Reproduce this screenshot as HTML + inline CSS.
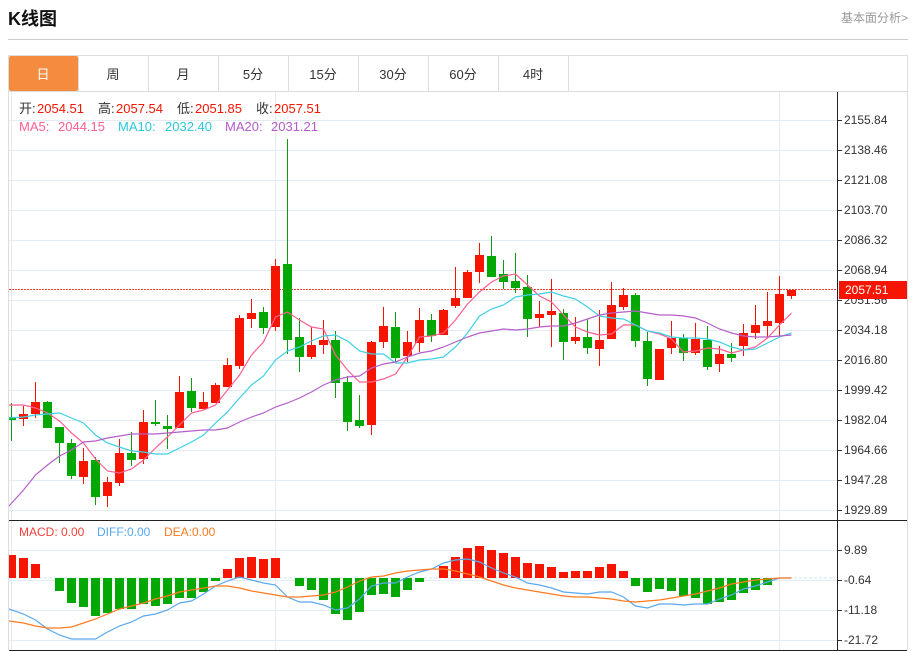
<!DOCTYPE html>
<html><head><meta charset="utf-8">
<style>
html,body{margin:0;padding:0;background:#fff;width:917px;height:651px;overflow:hidden}
svg{display:block}
text{font-family:"Liberation Sans","Noto Sans CJK SC",sans-serif}
.l{font-size:12px;fill:#333}
.h{font-size:13px}
</style></head><body>
<svg width="917" height="651" viewBox="0 0 917 651" xmlns="http://www.w3.org/2000/svg">
<defs><clipPath id="p"><rect x="9" y="92" width="828" height="558"/></clipPath></defs>
<text x="8" y="25" font-size="18" font-weight="700" fill="#111">K线图</text>
<text x="908" y="22" font-size="12" fill="#999" text-anchor="end">基本面分析&gt;</text>
<rect x="8" y="39" width="900" height="1" fill="#ccc"/>
<!-- frame -->
<path d="M8.5 55.5H907.5V650M8.5 55.5V650M8 91.5H908" fill="none" stroke="#ddd"/>
<rect x="9" y="56" width="69" height="35" rx="2" fill="#f58b3f"/>
<path d="M148.5 56V91M218.5 56V91M288.5 56V91M358.5 56V91M428.5 56V91M498.5 56V91M568.5 56V91M78.5 56V91" stroke="#ddd" fill="none"/>
<g font-size="13" text-anchor="middle" fill="#333">
<text x="43" y="79" fill="#fff">日</text>
<text x="113" y="79">周</text>
<text x="183" y="79">月</text>
<text x="253" y="79">5分</text>
<text x="323" y="79">15分</text>
<text x="393" y="79">30分</text>
<text x="463" y="79">60分</text>
<text x="533" y="79">4时</text>
</g>
<!-- grid -->
<path d="M9 120.5H837M9 150.5H837M9 180.5H837M9 210.5H837M9 240.5H837M9 270.5H837M9 300.5H837M9 330.5H837M9 360.5H837M9 390.5H837M9 420.5H837M9 450.5H837M9 480.5H837M9 510.5H837M9 550.5H837M9 580.5H837M9 610.5H837M9 640.5H837M11.5 92V650M275.5 92V650M779.5 92V650" stroke="#e3ecf3" fill="none"/>
<g clip-path="url(#p)">
<path d="M9 289.5H837" stroke="#f04030" stroke-dasharray="2 1" fill="none"/>
<!-- wicks -->
<path fill="none" stroke="#f51500" d="M23.5 406V426M35.5 382V418M83.5 448V484M107.5 477V507M119.5 439V486M143.5 410V464M179.5 376V428M203.5 392V409M215.5 383V403M227.5 358V387M239.5 315V369M251.5 299V328M275.5 259V331M311.5 327V359M323.5 320V354M371.5 341V435M383.5 307V348M407.5 331V362M419.5 308V352M443.5 309V335M455.5 267V308M467.5 270V298M479.5 243V283M539.5 301V327M551.5 279V347M575.5 317V344M599.5 310V366M611.5 282V339M623.5 288V310M659.5 349V380M671.5 321V354M695.5 323V355M719.5 346V372M743.5 324V356M755.5 305V339M767.5 292V337M779.5 276V337M791.5 290V299"/>
<path fill="none" stroke="#0d9a0d" d="M11.5 403V441M47.5 401V428M59.5 427V463M71.5 439V479M95.5 457V505M131.5 432V466M155.5 400V426M167.5 415V449M191.5 378V412M263.5 307V334M287.5 139V354M299.5 318V372M335.5 331V398M347.5 376V431M359.5 395V428M395.5 312V362M431.5 314V342M491.5 236V277M503.5 260V289M515.5 253V293M527.5 275V337M563.5 309V360M587.5 319V354M635.5 293V347M647.5 332V386M683.5 334V361M707.5 326V370M731.5 343V362"/>
<!-- bodies -->
<path fill="#f51500" d="M19 414h9v5h-9zM31 402h9v12h-9zM79 461h9v16h-9zM103 482h9v14h-9zM115 453h9v30h-9zM139 422h9v37h-9zM175 392h9v36h-9zM199 402h9v7h-9zM211 385h9v18h-9zM223 365h9v22h-9zM235 318h9v48h-9zM247 313h9v6h-9zM271 266h9v61h-9zM307 345h9v12h-9zM319 340h9v5h-9zM367 342h9v83h-9zM379 326h9v16h-9zM403 342h9v14h-9zM415 320h9v23h-9zM439 310h9v25h-9zM451 298h9v8h-9zM463 272h9v26h-9zM475 255h9v17h-9zM535 314h9v4h-9zM547 311h9v4h-9zM571 337h9v4h-9zM595 340h9v9h-9zM607 305h9v34h-9zM619 295h9v12h-9zM655 349h9v31h-9zM667 338h9v10h-9zM691 339h9v14h-9zM715 354h9v10h-9zM739 333h9v13h-9zM751 325h9v8h-9zM763 321h9v5h-9zM775 294h9v29h-9zM787 290h9v6h-9z"/>
<path fill="#04a804" d="M7 417h9v3h-9zM43 402h9v26h-9zM55 427h9v16h-9zM67 443h9v33h-9zM91 460h9v37h-9zM127 453h9v7h-9zM151 422h9v2h-9zM163 426h9v3h-9zM187 391h9v17h-9zM259 312h9v16h-9zM283 264h9v76h-9zM295 337h9v20h-9zM331 340h9v43h-9zM343 382h9v40h-9zM355 420h9v6h-9zM391 327h9v31h-9zM427 320h9v16h-9zM487 256h9v21h-9zM499 274h9v8h-9zM511 281h9v7h-9zM523 287h9v32h-9zM559 313h9v29h-9zM583 337h9v11h-9zM631 295h9v46h-9zM643 341h9v38h-9zM679 338h9v15h-9zM703 340h9v27h-9zM727 354h9v4h-9z"/>
<!-- MA lines -->
<polyline fill="none" stroke="#ff5f8f" stroke-width="1.2" points="9,405 23.5,405 35.5,408 47.5,413 59.5,421 71.5,433 83.5,443 95.5,459 107.5,471 119.5,473 131.5,469 143.5,460 155.5,448 167.5,437 179.5,425 191.5,413 203.5,410 215.5,405 227.5,390 239.5,375 251.5,355 263.5,342 275.5,317 287.5,312 299.5,320 311.5,327 323.5,329 335.5,355 347.5,370 359.5,382 371.5,382 383.5,379 395.5,374 407.5,357 419.5,337 431.5,336 443.5,333 455.5,320 467.5,304 479.5,292 491.5,282 503.5,276 515.5,274 527.5,285 539.5,296 551.5,302 563.5,315 575.5,327 587.5,332 599.5,335 611.5,334 623.5,325 635.5,325 647.5,331 659.5,334 671.5,339 683.5,352 695.5,351 707.5,348 719.5,349 731.5,353 743.5,350 755.5,347 767.5,338 779.5,325 791.5,313"/>
<polyline fill="none" stroke="#3fd0e6" stroke-width="1.2" points="9,418 23.5,417 35.5,415 47.5,414 59.5,413 71.5,418 83.5,423 95.5,435 107.5,443 119.5,447 131.5,451 143.5,452 155.5,454 167.5,454 179.5,448 191.5,442 203.5,435 215.5,423 227.5,412 239.5,398 251.5,385 263.5,376 275.5,360 287.5,351 299.5,347 311.5,341 323.5,336 335.5,335 347.5,341 359.5,351 371.5,354 383.5,354 395.5,363 407.5,363 419.5,360 431.5,359 443.5,357 455.5,347 467.5,333 479.5,316 491.5,309 503.5,305 515.5,297 527.5,295 539.5,294 551.5,292 563.5,296 575.5,299 587.5,307 599.5,316 611.5,318 623.5,319 635.5,325 647.5,331 659.5,333 671.5,337 683.5,338 695.5,338 707.5,339 719.5,342 731.5,347 743.5,350 755.5,349 767.5,343 779.5,337 791.5,333"/>
<polyline fill="none" stroke="#b65fcb" stroke-width="1.2" points="9,506 23.5,490 35.5,475 47.5,465 59.5,456 71.5,450 83.5,442 95.5,441 107.5,438 119.5,436 131.5,434 143.5,434 155.5,434 167.5,433 179.5,432 191.5,431 203.5,430 215.5,430 227.5,428 239.5,422 251.5,417 263.5,413 275.5,407 287.5,403 299.5,398 311.5,392 323.5,385 335.5,380 347.5,377 359.5,376 371.5,368 383.5,364 395.5,362 407.5,357 419.5,353 431.5,351 443.5,347 455.5,342 467.5,337 479.5,333 491.5,331 503.5,329 515.5,330 527.5,329 539.5,327 551.5,326 563.5,326 575.5,323 587.5,319 599.5,315 611.5,313 623.5,312 635.5,311 647.5,313 659.5,315 671.5,315 683.5,316 695.5,318 707.5,323 719.5,329 731.5,333 743.5,336 755.5,337 767.5,337 779.5,336 791.5,335"/>
<!-- MACD -->
<path d="M9 578H835" stroke="#cfe6f2" stroke-dasharray="3 2" fill="none"/>
<path fill="#f51500" d="M7 555h9v23h-9zM19 558h9v20h-9zM31 564h9v14h-9zM223 569h9v9h-9zM235 558h9v20h-9zM247 557h9v21h-9zM259 559h9v19h-9zM271 558h9v20h-9zM439 566h9v12h-9zM451 557h9v21h-9zM463 548h9v30h-9zM475 546h9v32h-9zM487 550h9v28h-9zM499 553h9v25h-9zM511 557h9v21h-9zM523 563h9v15h-9zM535 564h9v14h-9zM547 567h9v11h-9zM559 572h9v6h-9zM571 571h9v7h-9zM583 571h9v7h-9zM595 567h9v11h-9zM607 564h9v14h-9zM619 571h9v7h-9z"/>
<path fill="#04a804" d="M55 578h9v13h-9zM67 578h9v25h-9zM79 578h9v29h-9zM91 578h9v38h-9zM103 578h9v35h-9zM115 578h9v31h-9zM127 578h9v31h-9zM139 578h9v26h-9zM151 578h9v28h-9zM163 578h9v26h-9zM175 578h9v20h-9zM187 578h9v20h-9zM199 578h9v14h-9zM211 578h9v3h-9zM295 578h9v8h-9zM307 578h9v12h-9zM319 578h9v22h-9zM331 578h9v36h-9zM343 578h9v42h-9zM355 578h9v34h-9zM367 578h9v17h-9zM379 578h9v16h-9zM391 578h9v19h-9zM403 578h9v12h-9zM415 578h9v4h-9zM631 578h9v8h-9zM643 578h9v14h-9zM655 578h9v11h-9zM667 578h9v13h-9zM679 578h9v18h-9zM691 578h9v20h-9zM703 578h9v26h-9zM715 578h9v24h-9zM727 578h9v22h-9zM739 578h9v15h-9zM751 578h9v12h-9zM763 578h9v7h-9z"/>
<polyline fill="none" stroke="#5aa9ee" stroke-width="1.2" points="9,609 23.5,614 35.5,620 47.5,629 59.5,635 71.5,639 83.5,639 95.5,639 107.5,632 119.5,626 131.5,622 143.5,616 155.5,614 167.5,610 179.5,603 191.5,601 203.5,594 215.5,586 227.5,581 239.5,577 251.5,580 263.5,583 275.5,585 287.5,597 299.5,602 311.5,602 323.5,605 335.5,610 347.5,608 359.5,599 371.5,586 383.5,583 395.5,583 407.5,577 419.5,572 431.5,569 443.5,563 455.5,560 467.5,559 479.5,562 491.5,568 503.5,573 515.5,577 527.5,583 539.5,585 551.5,588 563.5,592 575.5,593 587.5,594 599.5,592 611.5,592 623.5,597 635.5,606 647.5,608 659.5,604 671.5,604 683.5,605 695.5,604 707.5,604 719.5,599 731.5,595 743.5,589 755.5,586 767.5,582 779.5,578 791.5,578"/>
<polyline fill="none" stroke="#ff7a1f" stroke-width="1.2" points="9,621 23.5,623 35.5,626 47.5,628 59.5,628 71.5,627 83.5,623 95.5,619 107.5,614 119.5,609 131.5,606 143.5,603 155.5,599 167.5,596 179.5,592 191.5,590 203.5,588 215.5,586 227.5,586 239.5,588 251.5,591 263.5,593 275.5,595 287.5,597 299.5,597 311.5,596 323.5,595 335.5,592 347.5,587 359.5,581 371.5,577 383.5,576 395.5,573 407.5,571 419.5,570 431.5,569 443.5,569 455.5,571 467.5,574 479.5,577 491.5,581 503.5,585 515.5,588 527.5,590 539.5,592 551.5,594 563.5,596 575.5,597 587.5,597 599.5,598 611.5,599 623.5,601 635.5,602 647.5,601 659.5,600 671.5,598 683.5,596 695.5,594 707.5,591 719.5,588 731.5,584 743.5,582 755.5,580 767.5,579 779.5,578 791.5,578"/>
</g>
<!-- axes -->
<path d="M837.5 92V650M9 520.5H907M9 650.5H907" stroke="#222" fill="none"/>
<path d="M838 120.5h4M838 150.5h4M838 180.5h4M838 210.5h4M838 240.5h4M838 270.5h4M838 300.5h4M838 330.5h4M838 360.5h4M838 390.5h4M838 420.5h4M838 450.5h4M838 480.5h4M838 510.5h4M838 550.5h4M838 580.5h4M838 610.5h4M838 640.5h4" stroke="#333" fill="none"/>
<g class="l">
<text class="l" x="844" y="124">2155.84</text>
<text class="l" x="844" y="154">2138.46</text>
<text class="l" x="844" y="184">2121.08</text>
<text class="l" x="844" y="214">2103.70</text>
<text class="l" x="844" y="244">2086.32</text>
<text class="l" x="844" y="274">2068.94</text>
<text class="l" x="844" y="304">2051.56</text>
<text class="l" x="844" y="334">2034.18</text>
<text class="l" x="844" y="364">2016.80</text>
<text class="l" x="844" y="394">1999.42</text>
<text class="l" x="844" y="424">1982.04</text>
<text class="l" x="844" y="454">1964.66</text>
<text class="l" x="844" y="484">1947.28</text>
<text class="l" x="844" y="514">1929.89</text>
<text class="l" x="844" y="554">9.89</text>
<text class="l" x="844" y="584">-0.64</text>
<text class="l" x="844" y="614">-11.18</text>
<text class="l" x="844" y="644">-21.72</text>
</g>
<rect x="839" y="281" width="68" height="18" fill="#f51500"/>
<text x="845" y="294" font-size="12" fill="#fff">2057.51</text>
<!-- headers -->
<g font-size="13">
<text x="19" y="113" fill="#333">开:</text><text x="37" y="113" fill="#f51500">2054.51</text>
<text x="98" y="113" fill="#333">高:</text><text x="116" y="113" fill="#f51500">2057.54</text>
<text x="177" y="113" fill="#333">低:</text><text x="195" y="113" fill="#f51500">2051.85</text>
<text x="256" y="113" fill="#333">收:</text><text x="274" y="113" fill="#f51500">2057.51</text>
<text x="19" y="131" fill="#ff5f8f">MA5:</text><text x="58" y="131" fill="#ff5f8f">2044.15</text>
<text x="118" y="131" fill="#2ac8e0">MA10:</text><text x="165" y="131" fill="#2ac8e0">2032.40</text>
<text x="225" y="131" fill="#b45cc8">MA20:</text><text x="271" y="131" fill="#b45cc8">2031.21</text>
</g>
<g font-size="12">
<text x="19" y="536" fill="#f5413a">MACD:</text><text x="61" y="536" fill="#f5413a">0.00</text>
<text x="97" y="536" fill="#52a8f0">DIFF:</text><text x="127" y="536" fill="#52a8f0">0.00</text>
<text x="164" y="536" fill="#ff7a1f">DEA:</text><text x="192" y="536" fill="#ff7a1f">0.00</text>
</g>
</svg>
</body></html>
